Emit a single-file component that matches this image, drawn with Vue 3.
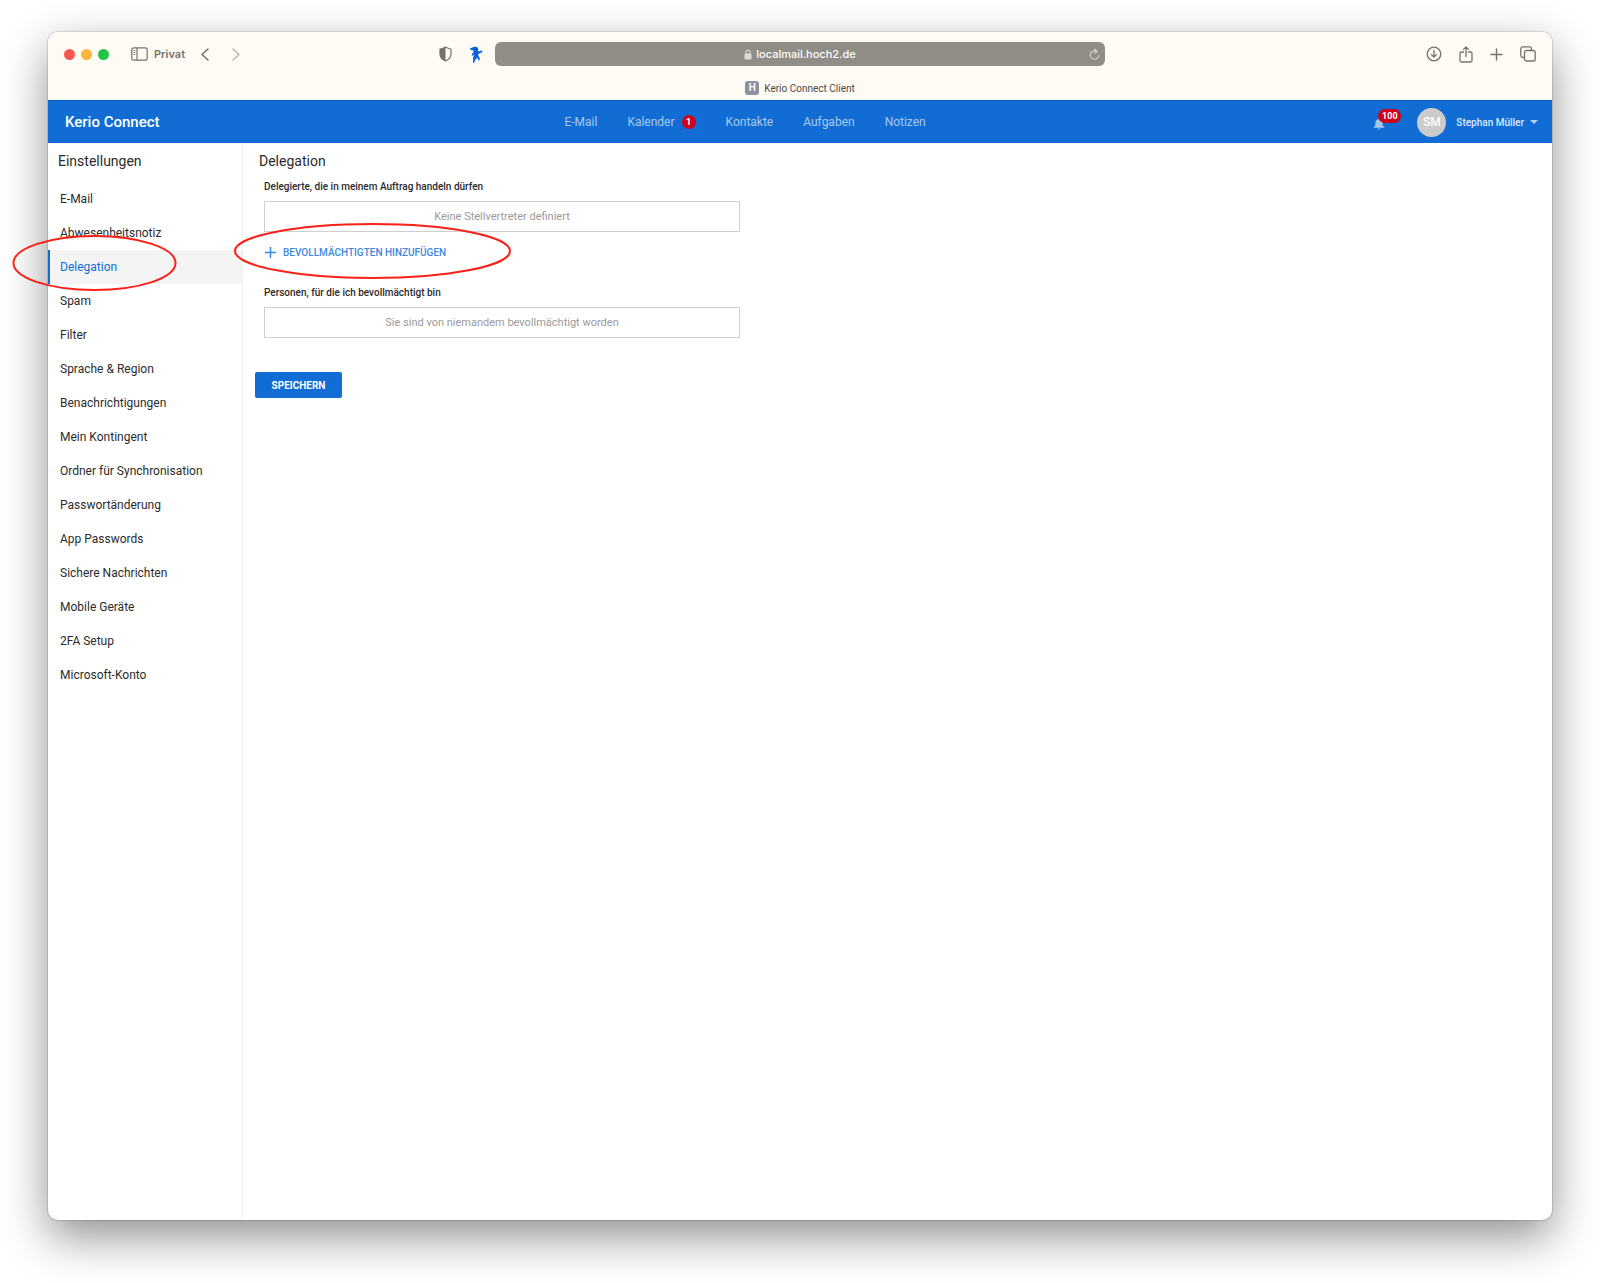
<script setup>
const modules = [
  { label: 'E-Mail' },
  { label: 'Kalender', count: 1 },
  { label: 'Kontakte' },
  { label: 'Aufgaben' },
  { label: 'Notizen' },
]

const settings = [
  'E-Mail',
  'Abwesenheitsnotiz',
  'Delegation',
  'Spam',
  'Filter',
  'Sprache & Region',
  'Benachrichtigungen',
  'Mein Kontingent',
  'Ordner für Synchronisation',
  'Passwortänderung',
  'App Passwords',
  'Sichere Nachrichten',
  'Mobile Geräte',
  '2FA Setup',
  'Microsoft-Konto',
]
const active = 'Delegation'
</script>

<template>
  <div class="desktop">
    <div class="window">
      <div class="chrome">
        <div class="toolbar">
          <div class="tools-left">
            <div class="lights">
              <i class="light red"></i>
              <i class="light amber"></i>
              <i class="light green"></i>
            </div>
            <button class="tool private" type="button">
              <svg width="17" height="14" viewBox="0 0 17 14" fill="none" stroke="currentColor" stroke-width="1.2">
                <rect x="0.8" y="0.8" width="15.4" height="12.4" rx="2" />
                <path d="M6 1v12M2.6 3.5h1.6M2.6 5.5h1.6M2.6 7.5h1.6" />
              </svg>
              <span>Privat</span>
            </button>
            <button class="tool back" type="button" aria-label="Zurück">
              <svg width="8" height="13" viewBox="0 0 8 13" fill="none" stroke="currentColor" stroke-width="1.5" stroke-linecap="round" stroke-linejoin="round">
                <path d="M7 1L1 6.5L7 12" />
              </svg>
            </button>
            <button class="tool forward" type="button" aria-label="Vorwärts">
              <svg width="8" height="13" viewBox="0 0 8 13" fill="none" stroke="currentColor" stroke-width="1.5" stroke-linecap="round" stroke-linejoin="round">
                <path d="M1 1L7 6.5L1 12" />
              </svg>
            </button>
            <span class="spacer"></span>
            <button class="tool" type="button" aria-label="Datenschutzbericht">
              <svg width="13" height="16" viewBox="0 0 13 16">
                <path d="M6.5 1.1C8 2.2 9.8 2.8 12 3v5.2c0 3-2 5.2-5.5 6.7C3 13.4 1 11.2 1 8.2V3C3.2 2.8 5 2.2 6.5 1.1z" fill="none" stroke="currentColor" stroke-width="1.2" stroke-linejoin="round" />
                <path d="M6.5 1.1v13.8C3 13.4 1 11.2 1 8.2V3C3.2 2.8 5 2.2 6.5 1.1z" fill="currentColor" />
              </svg>
            </button>
            <button class="tool bird" type="button" aria-label="Erweiterung">
              <svg width="14" height="17" viewBox="0 0 14 17" fill="#0b62dc">
                <path d="M1 2.4L4 1.2C5.5.5 7.800.6 9 2l.4 1.800L8.700 5l1.800.3L13 4.300l.5 1.400-2.800 1.800-1.500.2.300 2.200 1.300 2-.3 2.300-1.200.2-.3-2-1.200-.4-1.500 2-1 2.500-1.500.2.4-2.800-.3-1.500.8-2.600L4.600 8.300l-1 1.500-.9-.4.600-2L4.900 5.600 3.800 4.200 1.200 3.800z" />
              </svg>
            </button>
          </div>

          <div class="address">
            <svg class="lock" width="8" height="11" viewBox="0 0 8 11">
              <rect x="0.5" y="4.6" width="7" height="6" rx="1" fill="currentColor" />
              <path d="M2 5V3.2a2 2 0 0 1 4 0V5" fill="none" stroke="currentColor" stroke-width="1.2" />
            </svg>
            <span>localmail.hoch2.de</span>
            <button class="reload" type="button" aria-label="Neu laden">
              <svg width="11" height="13" viewBox="0 0 11 13" fill="none" stroke="currentColor" stroke-width="1.1" stroke-linecap="round" stroke-linejoin="round">
                <path d="M8.5 4.1A4.2 4.2 0 1 0 9.7 7.2M5.500 3.200h1.700M5.600 1l2.200 2.200-2.200 2.200" />
              </svg>
            </button>
          </div>

          <div class="tools-right">
            <button class="tool" type="button" aria-label="Downloads">
              <svg width="16" height="16" viewBox="0 0 16 16" fill="none" stroke="currentColor" stroke-width="1.3" stroke-linecap="round" stroke-linejoin="round">
                <circle cx="8" cy="8" r="6.8" />
                <path d="M8 4.5v6.5M5.5 8.6L8 11.1l2.5-2.5" />
              </svg>
            </button>
            <button class="tool" type="button" aria-label="Teilen">
              <svg width="14" height="17" viewBox="0 0 14 17" fill="none" stroke="currentColor" stroke-width="1.3" stroke-linecap="round" stroke-linejoin="round">
                <path d="M4.5 6H2.5A1.5 1.5 0 0 0 1 7.5V14.5A1.5 1.5 0 0 0 2.5 16h9a1.5 1.5 0 0 0 1.5-1.5V7.5A1.5 1.5 0 0 0 11.5 6h-2M7 10.5V1M4.5 3.4L7 1l2.5 2.4" />
              </svg>
            </button>
            <button class="tool" type="button" aria-label="Neuer Tab">
              <svg width="13" height="13" viewBox="0 0 13 13" fill="none" stroke="currentColor" stroke-width="1.4" stroke-linecap="round">
                <path d="M6.5 1v11M1 6.5h11" />
              </svg>
            </button>
            <button class="tool" type="button" aria-label="Tabübersicht">
              <svg width="16" height="16" viewBox="0 0 16 16" fill="none" stroke="currentColor" stroke-width="1.3" stroke-linejoin="round">
                <rect x="4.5" y="4.5" width="10.7" height="10.5" rx="2" />
                <path d="M4.5 11.5H2.8a2 2 0 0 1-2-2V2.8a2 2 0 0 1 2-2h6.7a2 2 0 0 1 2 2v1.7" />
              </svg>
            </button>
          </div>
        </div>
        <div class="tab">
          <span class="favicon">H</span>
          <span>Kerio Connect Client</span>
        </div>
      </div>

      <header class="appbar">
        <div class="brand">Kerio Connect</div>
        <nav class="modules">
          <a v-for="m in modules" :key="m.label" href="#">
            {{ m.label }}<span v-if="m.count" class="count">{{ m.count }}</span>
          </a>
        </nav>
        <div class="account">
          <button class="bell" type="button" aria-label="Erinnerungen">
            <svg width="12" height="12" viewBox="0 0 12 12" fill="#a6c8f0">
              <path d="M6 .5c.6 0 1 .4 1 .9 1.7.4 2.7 1.8 2.7 3.6v2.7L11.3 9v.7H.7V9l1.6-1.3V5C2.3 3.2 3.3 1.8 5 1.4c0-.5.4-.9 1-.9zM4.8 10.4h2.4c0 .7-.5 1.2-1.2 1.2s-1.2-.5-1.2-1.2z" />
            </svg>
            <span class="alerts">100</span>
          </button>
          <span class="avatar">SM</span>
          <button class="user" type="button">
            Stephan Müller
            <i class="caret"></i>
          </button>
        </div>
      </header>

      <div class="body">
        <aside class="sidebar">
          <h2>Einstellungen</h2>
          <nav>
            <a v-for="s in settings" :key="s" href="#" :class="{ active: s === active }">
              {{ s }}
              <svg v-if="s === active" class="ring ring-item" viewBox="0 0 165 58">
                <ellipse cx="82.5" cy="29" rx="81" ry="27" />
              </svg>
            </a>
          </nav>
        </aside>

        <main class="content">
          <h1>Delegation</h1>
          <section>
            <h3>Delegierte, die in meinem Auftrag handeln dürfen</h3>
            <div class="list">Keine Stellvertreter definiert</div>
            <button class="add" type="button">
              <svg width="11" height="11" viewBox="0 0 11 11" fill="none" stroke="currentColor" stroke-width="1.5">
                <path d="M5.5 0v11M0 5.5h11" />
              </svg>
              BEVOLLMÄCHTIGTEN HINZUFÜGEN
              <svg class="ring ring-add" viewBox="0 0 279 58">
                <ellipse cx="139.5" cy="29" rx="137.5" ry="27" />
              </svg>
            </button>
          </section>
          <section>
            <h3>Personen, für die ich bevollmächtigt bin</h3>
            <div class="list">Sie sind von niemandem bevollmächtigt worden</div>
          </section>
          <button class="save" type="button">SPEICHERN</button>
        </main>
      </div>
    </div>
  </div>
</template>

<style>
body {
  margin: 0;
  background: #fff;
}
</style>

<style scoped>
* {
  box-sizing: border-box;
}

.desktop {
  display: flex;
  min-height: 100vh;
  padding: 32px 48px 63px;
  overflow: hidden;
  font-family: Roboto, "Liberation Sans", sans-serif;
  font-size: 12px;
  color: #2b2b2b;
}

button {
  padding: 0;
  border: 0;
  background: none;
  font: inherit;
  color: inherit;
}

a {
  color: inherit;
  text-decoration: none;
}

h1,
h2,
h3 {
  margin: 0;
  font-weight: 400;
}

svg {
  display: block;
  flex: none;
}

.window {
  display: flex;
  flex: 1;
  flex-direction: column;
  min-width: 0;
  border-radius: 10px;
  background: #fff;
  box-shadow: 0 0 1px 1px rgba(0, 0, 0, 0.12), 0 17px 46px rgba(0, 0, 0, 0.44);
}

/* Browser chrome */
.chrome {
  height: 68px;
  border-radius: 10px 10px 0 0;
  background: #fefaf4;
  font-family: Inter, "Liberation Sans", sans-serif;
}

.toolbar {
  display: grid;
  grid-template-columns: 447fr 610fr 447fr;
  align-items: center;
  height: 44px;
}

.tools-left,
.tools-right,
.lights,
.private {
  display: flex;
  align-items: center;
}

.tools-left {
  padding: 0 12px 0 16px;
}

.lights {
  gap: 6px;
}

.light {
  width: 11px;
  height: 11px;
  border-radius: 50%;
}

.red {
  background: #fc5753;
}

.amber {
  background: #fdb43f;
}

.green {
  background: #22c446;
}

.tool {
  color: #75726d;
}

.private {
  gap: 6px;
  margin-left: 22px;
  font-size: 11px;
  font-weight: 600;
}

.back {
  margin-left: 16px;
}

.forward {
  margin-left: 23px;
  color: #b9b6b1;
}

.spacer {
  flex: 1;
}

.bird {
  margin-left: 17px;
}

.address {
  position: relative;
  display: flex;
  align-items: center;
  justify-content: center;
  gap: 4px;
  height: 24px;
  border-radius: 6px;
  background: #908c86;
  color: #fff;
  font-size: 11px;
  font-weight: 500;
}

.lock {
  color: #dddbd8;
}

.reload {
  position: absolute;
  right: 5px;
  color: #cfccc8;
}

.tools-right {
  justify-content: flex-end;
  gap: 17px;
  padding-right: 16px;
}

.tab {
  display: flex;
  align-items: center;
  justify-content: center;
  gap: 5px;
  height: 24px;
  color: #4c4a47;
  font-family: Roboto, "Liberation Sans", sans-serif;
  font-size: 10px;
}

.favicon {
  width: 14px;
  height: 14px;
  border-radius: 3px;
  background: #9091a0;
  color: #fff;
  font-weight: 600;
  line-height: 14px;
  text-align: center;
}

/* Application bar */
.appbar {
  display: grid;
  grid-template-columns: 517fr 360fr 627fr;
  align-items: center;
  height: 43px;
  border-top: 1px solid #0d5bbb;
  background: #116dd3;
  color: #fff;
}

.brand {
  padding-left: 17px;
  font-size: 15px;
  font-weight: 500;
}

.modules {
  display: flex;
  gap: 30px;
  color: #a9cbf0;
}

.modules a {
  display: flex;
  align-items: center;
  white-space: nowrap;
}

.count {
  width: 14px;
  height: 14px;
  margin-left: 7px;
  border-radius: 50%;
  background: #d0021b;
  color: #fff;
  font-size: 9px;
  font-weight: 700;
  line-height: 14px;
  text-align: center;
}

.account {
  display: flex;
  align-items: center;
  justify-content: flex-end;
  padding-right: 14px;
}

.bell {
  position: relative;
  padding-top: 4px;
  margin-right: 32px;
}

.alerts {
  position: absolute;
  top: -5px;
  left: 5px;
  width: 23px;
  border-radius: 7px;
  background: #d0021b;
  color: #fff;
  font-size: 9px;
  font-weight: 700;
  line-height: 14px;
  text-align: center;
}

.avatar {
  width: 29px;
  height: 29px;
  border-radius: 50%;
  background: #cbcbcb;
  font-size: 12px;
  font-weight: 500;
  line-height: 29px;
  text-align: center;
}

.user {
  display: flex;
  align-items: center;
  gap: 6px;
  margin-left: 10px;
  font-size: 10px;
  font-weight: 500;
  color: #dbe9fa;
}

.caret {
  border: 4px solid transparent;
  border-top-color: #b5d1f2;
  border-bottom: 0;
}

/* Page body */
.body {
  display: flex;
  flex: 1;
}

.sidebar {
  flex: none;
  width: 195px;
  border-right: 1px solid #f0f0f0;
}

.sidebar h2 {
  margin-bottom: 3px;
  padding-left: 10px;
  font-size: 14px;
  line-height: 36px;
}

.sidebar a {
  position: relative;
  display: block;
  padding-left: 12px;
  line-height: 34px;
}

.sidebar .active {
  padding-left: 10px;
  border-left: 2px solid #116dd3;
  background: #f4f4f4;
  color: #116dd3;
}

.content {
  flex: 1;
  padding: 8px 16px;
}

.content h1 {
  font-size: 14px;
  line-height: 20px;
}

.content section {
  width: 476px;
  max-width: 100%;
  margin-left: 5px;
}

.content h3 {
  padding: 9px 0 8px;
  font-size: 10px;
  font-weight: 500;
  line-height: 13px;
}

.list {
  border: 1px solid #cfcfcf;
  color: #9a9a9a;
  font-size: 11px;
  line-height: 29px;
  text-align: center;
}

.add {
  position: relative;
  display: flex;
  align-items: center;
  gap: 7px;
  height: 24px;
  margin: 8px 0 13px 1px;
  color: #3d88de;
  font-size: 10px;
  font-weight: 500;
}

.save {
  width: 87px;
  height: 26px;
  margin: 34px 0 0 -4px;
  border-radius: 2px;
  background: #116dd3;
  color: #fff;
  font-size: 10px;
  font-weight: 700;
}

/* Red highlight rings */
.ring {
  position: absolute;
  z-index: 1;
  fill: none;
  stroke: #fb2018;
  stroke-width: 2;
  pointer-events: none;
}

.ring-item {
  top: -16px;
  left: -38px;
  width: 165px;
  height: 58px;
}

.ring-add {
  top: -18px;
  left: -32px;
  width: 279px;
  height: 58px;
}
</style>
